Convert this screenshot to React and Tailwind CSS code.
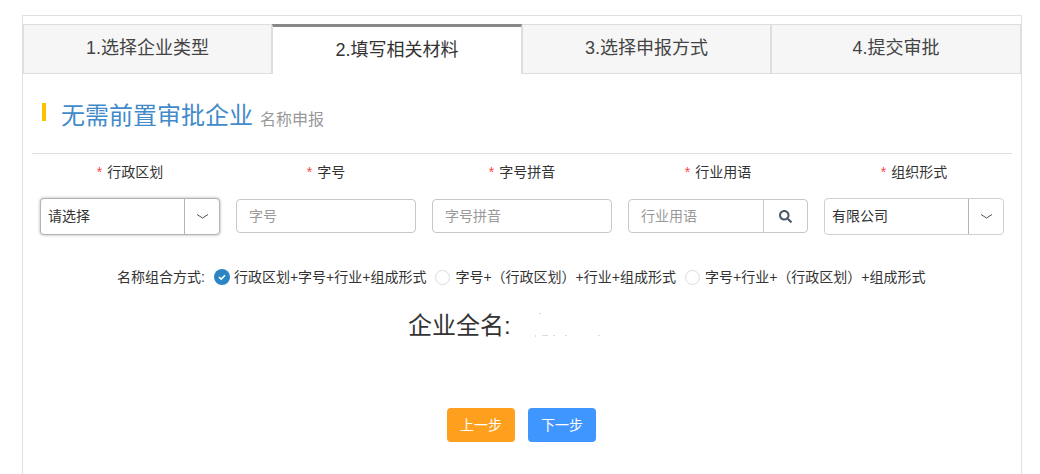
import { FaSearch } from "react-icons/fa";

const font = { fontFamily: '"Liberation Sans", "Noto Sans CJK SC", sans-serif' };

const tabs = ["1.选择企业类型", "2.填写相关材料", "3.选择申报方式", "4.提交审批"];
const labels = ["行政区划", "字号", "字号拼音", "行业用语", "组织形式"];

const Chevron = () => (
  <svg width="13" height="7" viewBox="0 0 13 7" fill="none" stroke="#555" strokeWidth="1">
    <path d="M1 1.5 L6.5 5 L12 1.5" />
  </svg>
);

const Select = ({ value, focused }) => (
  <div
    className={`flex h-[37px] w-[180px] rounded-[4px] border bg-white ${
      focused ? "border-[#b4b4b4] shadow-[0_0_3px_rgba(0,0,0,0.35)]" : "border-[#cfcfcf]"
    }`}
  >
    <div className="flex-1 pl-[7px] text-[14px] leading-[35px] text-[#333]">{value}</div>
    <div className="flex w-[35px] items-center justify-center border-l border-[#b4b4b4]">
      <Chevron />
    </div>
  </div>
);

const Input = ({ placeholder }) => (
  <div className="my-px h-[34px] w-[180px] rounded-[4px] border border-[#c8c8c8] bg-white pl-3 text-[14px] leading-[32px] text-[#999]">
    {placeholder}
  </div>
);

const Radio = ({ checked, text }) => (
  <div className="flex items-center">
    {checked ? (
      <svg className="mr-1" width="16" height="16" viewBox="0 0 16 16">
        <circle cx="8" cy="8" r="8" fill="#2b85c4" />
        <path d="M5 8.2 L7.2 10.2 L11 6.2" fill="none" stroke="#fff" strokeWidth="1.6" />
      </svg>
    ) : (
      <span className="mr-[5px] h-[15px] w-[15px] rounded-full border border-[#dcdcdc] bg-white" />
    )}
    <span>{text}</span>
  </div>
);

const App = () => {
  return (
    <div className="h-[474px] w-[1040px] overflow-hidden bg-white pt-[15px] pl-[22px]" style={font}>
      <div className="h-[459px] w-[1000px] border-x border-t border-[#e0e0e0] pt-2">
        <div className="flex h-[50px]">
          {tabs.map((t, i) =>
            i === 1 ? (
              <div
                key={t}
                className="w-[250px] border-x border-t-[3px] border-x-[#dedede] border-t-[#888] bg-white pt-[9px] text-center text-[18px] leading-[28px] text-[#333]"
              >
                {t}
              </div>
            ) : (
              <div
                key={t}
                className={`border border-[#dedede] bg-[#f6f6f6] pt-[9px] text-center text-[18px] leading-[28px] text-[#444] ${
                  i === 3 ? "w-[250px]" : "w-[249px]"
                }`}
              >
                {t}
              </div>
            )
          )}
        </div>

        <div className="flex h-[79px] items-start pl-[19px] pt-[29px]">
          <span className="h-[18px] w-1 bg-[#ffc000]" />
          <span className="ml-[15px] text-[24px] leading-[26px] text-[#428bca]">无需前置审批企业</span>
          <span className="ml-[7px] mt-[5px] text-[16px] leading-[24px] text-[#999]">名称申报</span>
        </div>

        <div className="mx-[9px] border-t border-[#e0e0e0]" />

        <div className="ml-[17px] mt-[8px] grid w-[964px] grid-cols-5 gap-x-4">
          {labels.map((l) => (
            <div key={l} className="text-center text-[14px] leading-[20px] text-[#333]">
              <span className="mr-[5px] text-[#f44]">*</span>
              {l}
            </div>
          ))}
        </div>

        <div className="ml-[17px] mt-[16px] grid h-[37px] w-[964px] grid-cols-5 gap-x-4">
          <Select value="请选择" focused />
          <Input placeholder="字号" />
          <Input placeholder="字号拼音" />
          <div className="my-px flex h-[34px] w-[180px] rounded-[4px] border border-[#c8c8c8] bg-white">
            <div className="flex-1 pl-3 text-[14px] leading-[32px] text-[#999]">行业用语</div>
            <div className="flex w-[44px] items-center justify-center border-l border-[#c8c8c8] text-[#4a5a6a]">
              <FaSearch size={13} />
            </div>
          </div>
          <Select value="有限公司" />
        </div>

        <div className="ml-[94px] mt-[32px] flex h-[20px] items-center text-[14px] text-[#333]">
          <span className="mr-[9px]">名称组合方式:</span>
          <div className="flex items-center gap-[9px]">
            <Radio checked text="行政区划+字号+行业+组成形式" />
            <Radio text="字号+（行政区划）+行业+组成形式" />
            <Radio text="字号+行业+（行政区划）+组成形式" />
          </div>
        </div>

        <div className="ml-[385px] mt-[21px] flex h-[36px] items-center text-[24px] leading-[36px] text-[#333]">
          <span>企业全名:</span>
          <svg className="ml-[22px]" width="70" height="30" viewBox="0 0 70 30" fill="#ddd">
            <rect x="6" y="2" width="2" height="1" />
            <rect x="2" y="24" width="1" height="2" />
            <rect x="9" y="24" width="6" height="1" />
            <rect x="20" y="24" width="2" height="1" />
            <rect x="32" y="24" width="2" height="1" />
            <rect x="65" y="24" width="2" height="1" />
          </svg>
        </div>

        <div className="ml-[424px] mt-[64px] flex gap-[13px]">
          <button className="h-[34px] w-[68px] rounded-[4px] bg-[#ff9f1e] text-[14px] text-white">上一步</button>
          <button className="h-[34px] w-[68px] rounded-[4px] bg-[#4096ff] text-[14px] text-white">下一步</button>
        </div>
      </div>
    </div>
  );
};

export default App;
